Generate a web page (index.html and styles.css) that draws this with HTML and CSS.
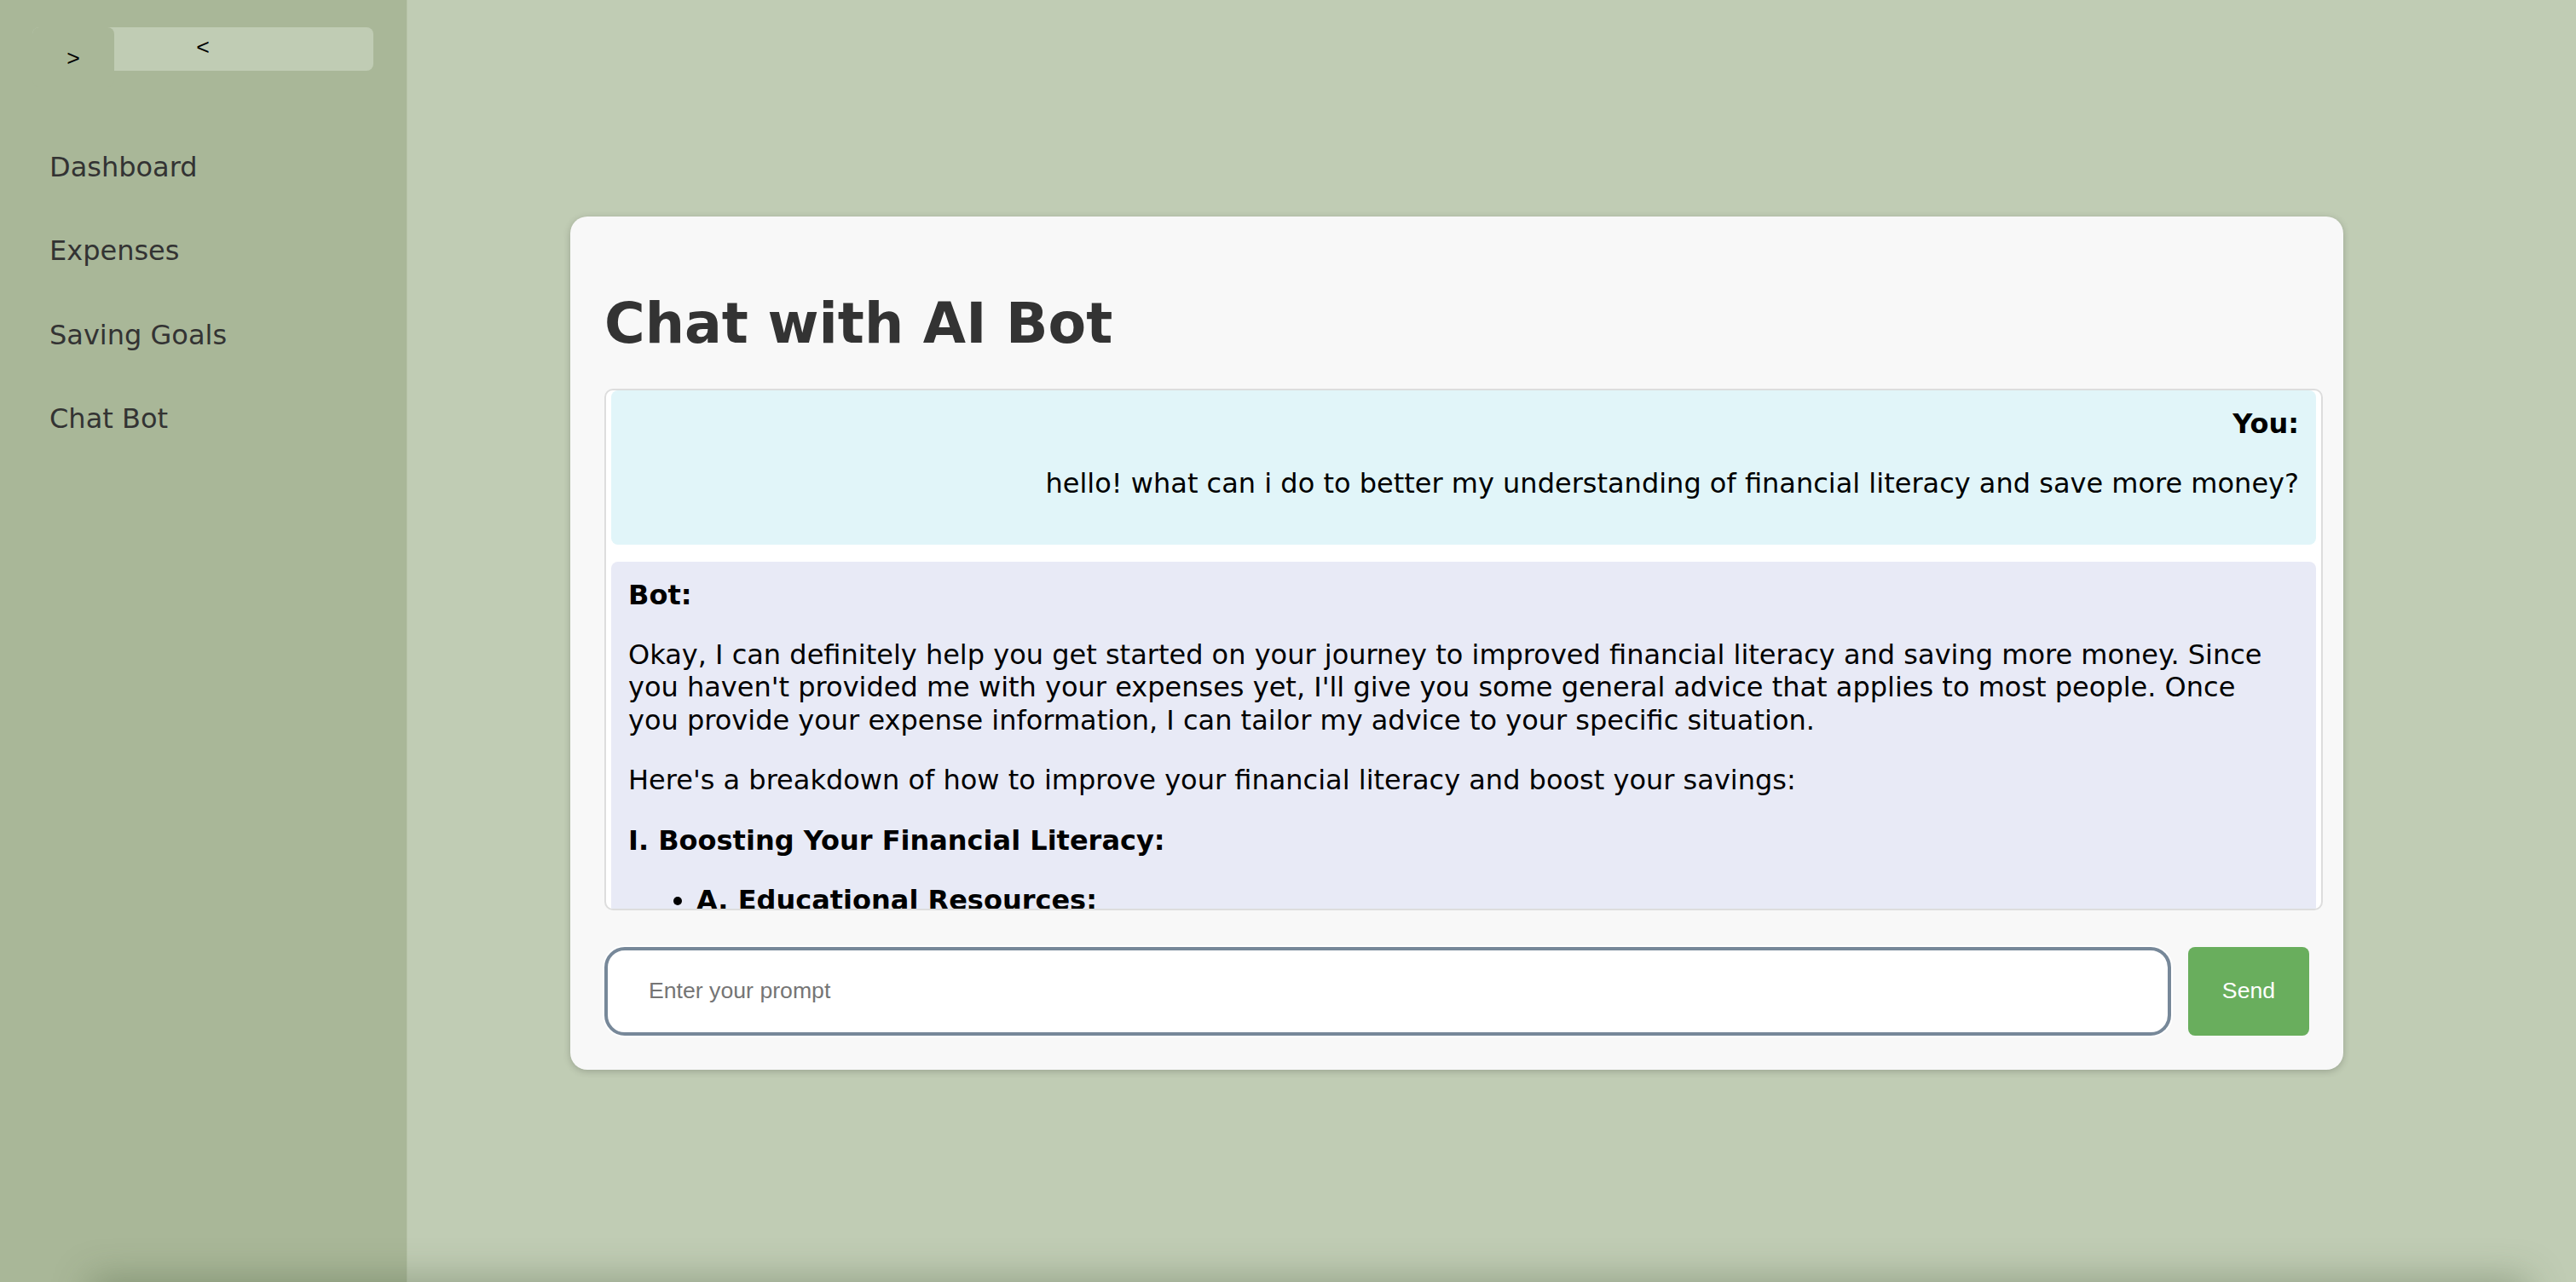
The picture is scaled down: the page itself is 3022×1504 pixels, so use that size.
FILE: index.html
```html
<!DOCTYPE html>
<html lang="en">
<head>
<meta charset="utf-8">
<title>Chat with AI Bot</title>
<link rel="stylesheet" href="styles.css">
</head>
<body>
  <aside class="sidebar">
    <div class="toggle-wrap">
      <button class="close-btn">&lt;</button>
      <button class="open-btn">&gt;</button>
    </div>
    <nav class="nav">
      <a class="nav-item" href="#">Dashboard</a>
      <a class="nav-item" href="#">Expenses</a>
      <a class="nav-item" href="#">Saving Goals</a>
      <a class="nav-item" href="#">Chat Bot</a>
    </nav>
  </aside>
  <main class="main">
    <section class="card">
      <h2 class="title">Chat with AI Bot</h2>
      <div class="chat-box">
        <div class="message user">
          <strong>You:</strong>
          <p>hello! what can i do to better my understanding of financial literacy and save more money?</p>
        </div>
        <div class="message bot">
          <strong>Bot:</strong>
          <p>Okay, I can definitely help you get started on your journey to improved financial literacy and saving more money. Since you haven't provided me with your expenses yet, I'll give you some general advice that applies to most people. Once you provide your expense information, I can tailor my advice to your specific situation.</p>
          <p>Here's a breakdown of how to improve your financial literacy and boost your savings:</p>
          <p><strong>I. Boosting Your Financial Literacy:</strong></p>
          <ul>
            <li><strong>A. Educational Resources:</strong></li>
          </ul>
        </div>
      </div>
      <form class="input-row">
        <input class="prompt" type="text" placeholder="Enter your prompt">
        <button class="send" type="button">Send</button>
      </form>
    </section>
  </main>
</body>
</html>
```

FILE: styles.css
```css
* {
  box-sizing: border-box;
}

html, body {
  margin: 0;
  height: 100%;
}

body {
  display: flex;
  height: 1504px;
  overflow: hidden;
  background: #c0ccb4;
  font-family: "DejaVu Sans", Verdana, sans-serif;
  font-size: 32px;
  line-height: 1.2;
  color: #333;
}

body::after {
  content: "";
  position: fixed;
  left: 110px;
  right: 60px;
  top: 100%;
  height: 40px;
  box-shadow: 0 0 44px 4px rgba(60, 80, 50, 0.35);
}

.sidebar {
  width: 478px;
  flex: none;
  background: #a9b798;
  border-right: 1px solid #b9c5ab;
  padding-top: 32px;
}

.toggle-wrap {
  position: relative;
  margin-left: 38px;
  width: 400px;
  height: 70px;
}

.close-btn,
.open-btn {
  font-family: "Liberation Sans", Arial, sans-serif;
  font-size: 26.67px;
  color: #000;
  border: none;
  padding: 0;
  line-height: 1;
  cursor: pointer;
}

.close-btn {
  display: block;
  width: 400px;
  height: 51px;
  background: #c0ccb4;
  border-radius: 8px;
  padding-bottom: 4px;
}

.open-btn {
  position: absolute;
  left: 0;
  top: 0;
  width: 96px;
  height: 70px;
  background: #a9b798;
  border-radius: 8px;
  padding-top: 2px;
}

.nav {
  display: flex;
  flex-direction: column;
  margin-top: 45px;
  padding-left: 58px;
}

.nav-item {
  display: block;
  padding: 30px 0;
  color: #333;
  text-decoration: none;
  line-height: 38.4px;
}

.main {
  flex: 1;
  display: flex;
  align-items: center;
  padding-left: 191px;
  padding-top: 5px;
}

.card {
  width: 2080px;
  flex: none;
  background: #f8f8f8;
  border-radius: 20px;
  padding: 40px;
  box-shadow: 0 2px 8px rgba(0, 0, 0, 0.2);
}

.title {
  margin: 48px 0 37px;
  font-size: 65px;
  font-weight: bold;
  line-height: 76.8px;
  color: #333;
}

.chat-box {
  width: 2016px;
  height: 612px;
  overflow: hidden;
  background: #fff;
  border: 2px solid #ddd;
  border-radius: 10px;
  padding: 0 6px;
  color: #000;
}

.message {
  border-radius: 8px;
  padding: 20px;
  margin-bottom: 20px;
}

.message p {
  margin: 32px 0;
}

.message.user {
  background: #e1f5f9;
  text-align: right;
}

.message.bot {
  background: #e8eaf6;
  text-align: left;
  padding-right: 34px;
}

.message ul {
  margin: 32px 0;
  padding-left: 80px;
}

.input-row {
  display: flex;
  gap: 20px;
  margin: 43px 0 0;
  height: 104px;
}

.prompt {
  flex: 1;
  min-width: 0;
  height: 104px;
  border: 4px solid #778899;
  border-radius: 24px;
  padding: 0 48px;
  background: #fff;
  font-family: "Liberation Sans", Arial, sans-serif;
  font-size: 26.67px;
  color: #333;
  box-shadow: 0 0 0 2px rgba(255, 255, 255, 0.9);
  outline: none;
}

.prompt::placeholder {
  color: #757575;
}

.send {
  width: 142px;
  height: 104px;
  flex: none;
  border: none;
  border-radius: 8px;
  background: #69ae5d;
  color: #fff;
  font-family: "Liberation Sans", Arial, sans-serif;
  font-size: 26.67px;
  cursor: pointer;
}
```
